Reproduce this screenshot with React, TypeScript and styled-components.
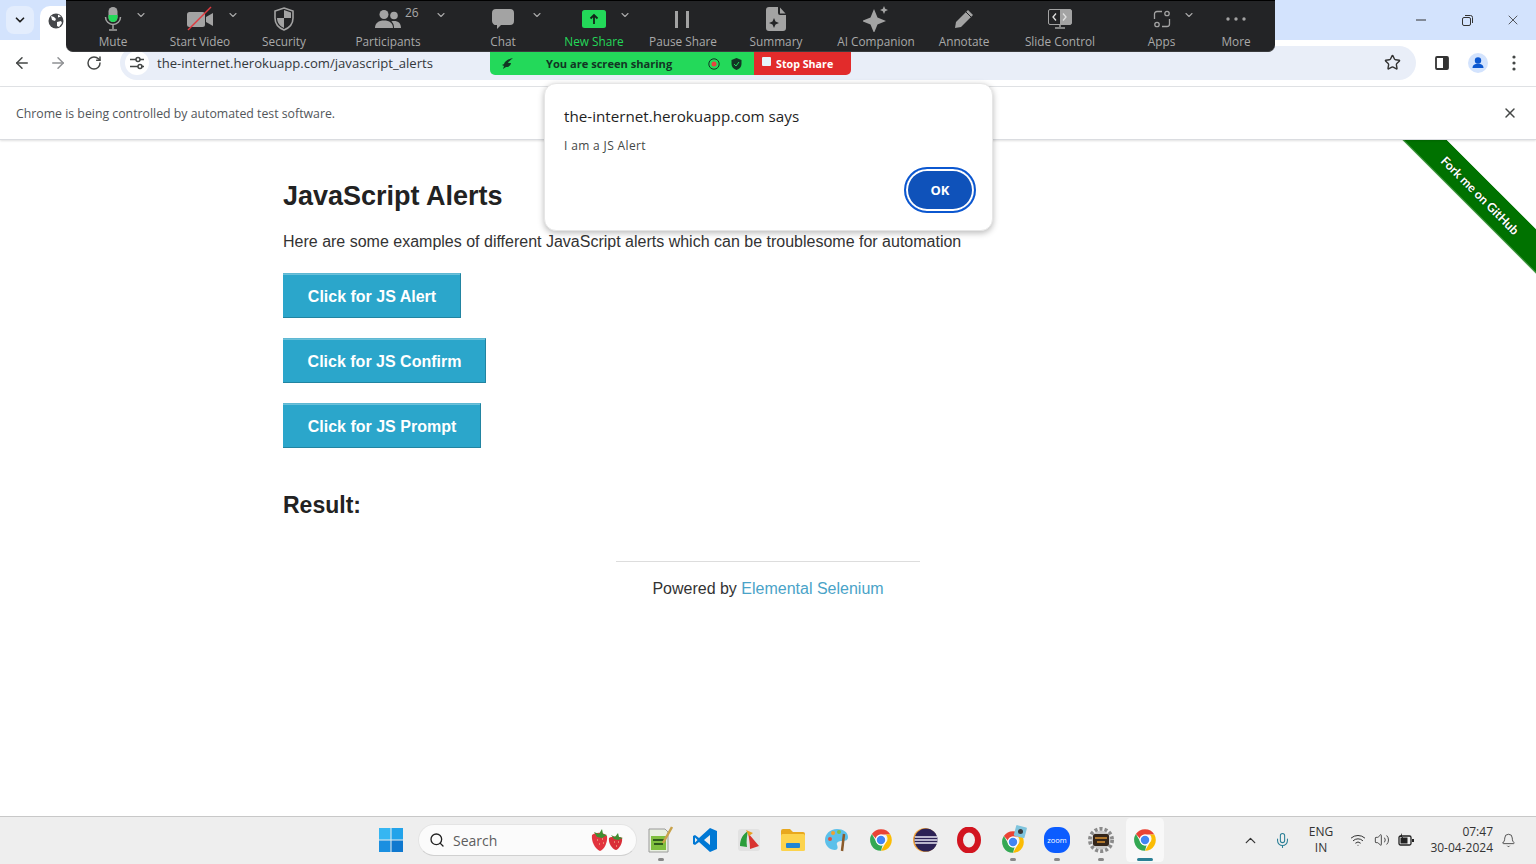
import React from 'react';
import styled, { createGlobalStyle } from 'styled-components';
import { ArrowLeft, ArrowRight, RotateCw, Star, X, Search, ChevronUp, ChevronDown, Mic, Wifi, Volume2, Bell } from 'lucide-react';

const GlobalStyle = createGlobalStyle`
  html, body { margin: 0; padding: 0; background: #fff; }
  body { font-family: "Open Sans", sans-serif; overflow: hidden; }
  * { box-sizing: border-box; }
`;

const Screen = styled.div`
  position: relative;
  width: 1536px;
  height: 864px;
  display: flex;
  flex-direction: column;
  overflow: hidden;
`;

/* browser chrome */
const TabStrip = styled.div`
  height: 40px;
  background: #d3e3fd;
  display: flex;
  align-items: flex-start;
  padding: 6px 0 0 6px;
  flex: none;
`;
const TabSearch = styled.div`
  width: 28px;
  height: 28px;
  border-radius: 8px;
  background: #e3edfd;
  color: #1f1f1f;
  display: flex;
  align-items: center;
  justify-content: center;
`;
const Tab = styled.div`
  width: 120px;
  height: 34px;
  margin-left: 6px;
  background: #fff;
  border-radius: 10px 10px 0 0;
  padding: 6px 0 0 8px;
`;
const WindowButtons = styled.div`
  margin-left: auto;
  margin-top: -6px;
  display: flex;
  color: #333;
`;
const WindowButton = styled.div`
  width: 46px;
  height: 40px;
  display: flex;
  align-items: center;
  justify-content: center;
`;
const NavBar = styled.div`
  height: 47px;
  background: #fff;
  border-radius: 8px 8px 0 0;
  border-bottom: 1px solid #e1e3e6;
  display: flex;
  align-items: center;
  padding: 0 0 1px 4px;
  flex: none;
`;
const NavButton = styled.div<{ $muted?: boolean }>`
  width: 36px;
  height: 36px;
  display: flex;
  align-items: center;
  justify-content: center;
  color: ${p => (p.$muted ? '#8f9194' : '#444746')};
`;
const Omnibox = styled.div`
  width: 1296px;
  height: 34px;
  margin-left: 8px;
  border-radius: 17px;
  background: #e9eef8;
  display: flex;
  align-items: center;
  padding: 0 15px 0 5px;
`;
const SiteButton = styled.div`
  width: 24px;
  height: 24px;
  border-radius: 50%;
  background: #fff;
  display: flex;
  align-items: center;
  justify-content: center;
`;
const Url = styled.span`
  margin-left: 8px;
  font-size: 13.1px;
  color: #33373b;
  white-space: nowrap;
  flex: 1;
`;
const ToolIcons = styled.div`
  display: flex;
  align-items: center;
  margin-left: 8px;
`;
const Infobar = styled.div`
  height: 53px;
  background: #fff;
  border-bottom: 1px solid #dadce0;
  box-shadow: 0 1px 2px rgba(0, 0, 0, 0.12);
  display: flex;
  align-items: center;
  justify-content: space-between;
  padding: 0 18px 0 16px;
  font-size: 12.3px;
  color: #52565a;
  flex: none;
  position: relative;
  z-index: 1;
`;

/* page */
const Main = styled.main`
  position: relative;
  flex: 1;
  overflow: hidden;
  background: #fff;
  font-family: "Liberation Sans", Arial, sans-serif;
  color: #222;
`;
const Row = styled.div`
  width: 970px;
  margin: 0 auto;
`;
const Heading = styled.h3`
  margin: 0;
  padding-top: 39px;
  font-size: 27px;
  line-height: 34px;
  font-weight: 700;
`;
const Intro = styled.p`
  margin: 17px 0 0;
  font-size: 16px;
  line-height: 24px;
  color: #333;
  white-space: nowrap;
`;
const Buttons = styled.div`
  margin-top: 19px;
  display: flex;
  flex-direction: column;
  align-items: flex-start;
  gap: 20px;
`;
const AlertButton = styled.button<{ $w: number }>`
  width: ${p => p.$w}px;
  height: 45px;
  padding: 2px 0 0 1px;
  background: #2ba6cb;
  border: 1px solid #2284a1;
  border-top-color: #5fb8d3;
  border-left: none;
  box-shadow: inset 0 1px 0 rgba(255, 255, 255, 0.3);
  color: #fff;
  font: 700 16px "Liberation Sans", Arial, sans-serif;
`;
const ResultTitle = styled.h4`
  margin: 42px 0 0;
  font-size: 23px;
  line-height: 30px;
  font-weight: 700;
`;
const Footer = styled.footer`
  margin: 41px auto 0;
  width: 304px;
  border-top: 1px solid #ddd;
  padding-top: 17px;
  text-align: center;
  font-size: 16px;
  line-height: 20px;
  color: #333;
  white-space: nowrap;
`;
const FooterLink = styled.a`
  color: #4aa3c8;
`;
const Ribbon = styled.div`
  position: absolute;
  top: 40px;
  right: -74px;
  width: 260px;
  height: 31px;
  transform: rotate(45deg);
  background: #007200;
  border-top: 1px solid #007200;
  border-bottom: 1px solid #4f9d4f;
  color: #fff;
  font: 700 12.3px Lato, sans-serif;
  display: flex;
  align-items: center;
  justify-content: center;
  text-shadow: 0 0 2px rgba(0, 0, 0, 0.5);
`;

/* zoom meeting controls */
const ZoomBar = styled.div`
  position: absolute;
  top: 0;
  left: 66px;
  width: 1209px;
  height: 52px;
  background: #232426;
  border-top: 1px solid #000;
  border-bottom: 1px solid #3a3b3d;
  border-radius: 0 0 7px 7px;
  display: flex;
  z-index: 5;
`;
const ZoomItem = styled.div<{ $w: number; $green?: boolean }>`
  position: relative;
  width: ${p => p.$w}px;
  flex: none;
  display: flex;
  flex-direction: column;
  align-items: center;
  color: ${p => (p.$green ? '#23d959' : '#a9a9a9')};
  font-size: 11.8px;
  white-space: nowrap;
`;
const ZoomIcon = styled.div`
  height: 34px;
  display: flex;
  align-items: center;
  justify-content: center;
  padding-top: 2px;
`;
const ZoomLabel = styled.span`
  line-height: 14px;
  margin-top: -1px;
`;
const ZoomCaret = styled.span<{ $dx: number }>`
  position: absolute;
  top: 8px;
  left: calc(50% + ${p => p.$dx}px);
  color: #a9a9a9;
  display: flex;
`;
const ZoomCount = styled.span`
  position: absolute;
  top: 4px;
  left: calc(50% + 17px);
  font-size: 12px;
  line-height: 16px;
  color: #a9a9a9;
`;
const ShareBar = styled.div`
  position: absolute;
  top: 52px;
  left: 490px;
  width: 361px;
  height: 23px;
  display: flex;
  border-radius: 0 0 5px 5px;
  overflow: hidden;
  font-size: 11.1px;
  font-weight: 700;
  z-index: 4;
`;
const ShareStatus = styled.div`
  width: 264px;
  background: #23d95a;
  color: #123524;
  display: flex;
  align-items: center;
  padding-left: 12px;
  white-space: nowrap;
`;
const ShareText = styled.span`
  margin-left: 32px;
  margin-right: 36px;
`;
const ShareShield = styled.svg`
  margin-left: 11px;
`;
const ShareStop = styled.div`
  flex: 1;
  background: #e22b2b;
  color: #fff;
  display: flex;
  align-items: center;
  padding-left: 8px;
  gap: 5px;
  font-size: 10.7px;
`;
const StopSquare = styled.span`
  width: 9px;
  height: 9px;
  margin-top: -4px;
  border-radius: 1px;
  background: #e6f5fb;
`;

/* js alert */
const Dialog = styled.div`
  position: absolute;
  top: 83px;
  left: 544px;
  width: 449px;
  height: 148px;
  background: #fff;
  border: 1px solid #e6e6e6;
  border-radius: 12px;
  box-shadow: 0 2px 6px rgba(0, 0, 0, 0.28);
  padding: 22px 16px 0 19px;
  display: flex;
  flex-direction: column;
  z-index: 3;
`;
const DialogTitle = styled.div`
  font-size: 15.2px;
  line-height: 20px;
  font-weight: 500;
  color: #1f1f1f;
`;
const DialogBody = styled.div`
  margin-top: 10px;
  font-size: 12px;
  letter-spacing: 0.35px;
  line-height: 20px;
  color: #444746;
`;
const DialogActions = styled.div`
  margin-top: 11px;
  display: flex;
  justify-content: flex-end;
`;
const OkButton = styled.button`
  width: 72px;
  height: 46px;
  border-radius: 23px;
  border: 2px solid #fff;
  outline: 2px solid #0b57d0;
  outline-offset: -2px;
  background: #0f52ba;
  box-shadow: inset 0 0 0 2px #fff;
  background-clip: padding-box;
  color: #fff;
  font: 700 13px "Open Sans", sans-serif;
`;

/* windows taskbar */
const Taskbar = styled.div`
  height: 48px;
  flex: none;
  background: #eeeeee;
  border-top: 1px solid #c8c8c8;
  display: flex;
  align-items: center;
  padding: 0 0 1px 369px;
  position: relative;
  z-index: 1;
`;
const TaskSlot = styled.div<{ $active?: boolean }>`
  position: relative;
  width: 44px;
  height: 44px;
  flex: none;
  display: flex;
  align-items: center;
  justify-content: center;
  border-radius: 6px;
  border: solid transparent;
  border-width: 0 3px;
  background: ${p => (p.$active ? '#f8f8f8' : 'transparent')};
  background-clip: padding-box;
`;
const TaskDot = styled.span<{ $active?: boolean }>`
  position: absolute;
  bottom: 1px;
  left: 50%;
  transform: translateX(-50%);
  width: ${p => (p.$active ? 16 : 6)}px;
  height: 3px;
  border-radius: 2px;
  background: ${p => (p.$active ? '#2a8095' : '#888')};
`;
const SearchBox = styled.div`
  width: 219px;
  height: 32px;
  margin: 0 2px 0 5px;
  flex: none;
  border-radius: 16px;
  background: #fbfbfb;
  border: 1px solid #e4e4e4;
  border-bottom-color: #d0d0d0;
  display: flex;
  align-items: center;
  padding: 0 12px 0 10px;
  color: #5d5d5d;
  font-size: 14px;
  gap: 8px;
`;
const SearchWord = styled.span`
  flex: 1;
`;
const Tray = styled.div`
  margin-left: 73px;
  display: flex;
  align-items: center;
  color: #333;
`;
const TrayText = styled.div<{ $w: number; $right?: boolean }>`
  width: ${p => p.$w}px;
  font-size: 12px;
  line-height: 16px;
  text-align: ${p => (p.$right ? 'right' : 'center')};
  color: #333;
  white-space: nowrap;
`;
const TraySlot = styled.div<{ $w: number; $ml?: number }>`
  width: ${p => p.$w}px;
  margin-left: ${p => p.$ml ?? 0}px;
  flex: none;
  display: flex;
  justify-content: center;
`;

const G = '#a3a3a3';

const MicIcon = () => (
  <svg width="18" height="26" viewBox="0 0 18 26">
    <rect x="4.5" y="1" width="9" height="15" rx="4.5" fill={G} />
    <path d="M4.5 9h9v2.5a4.5 4.5 0 0 1-9 0z" fill="#23d959" />
    <path d="M1.5 11a7.5 7.5 0 0 0 15 0M9 19v4M5 24h8" fill="none" stroke={G} strokeWidth="1.5" />
  </svg>
);
const VideoIcon = () => (
  <svg width="28" height="26" viewBox="0 0 28 26">
    <rect x="1" y="6" width="18" height="15" rx="2.5" fill={G} />
    <path d="M20 11l7-4v13l-7-4z" fill={G} />
    <path d="M2 24L25 1" stroke="#e0393e" strokeWidth="1.4" />
  </svg>
);
const ShieldIcon = () => (
  <svg width="22" height="24" viewBox="0 0 22 24">
    <path d="M11 1l9 3v7c0 6-4 10-9 12-5-2-9-6-9-12V4z" fill="none" stroke={G} strokeWidth="1.6" />
    <path d="M11 3l7 2.4V11h-7zM11 11v10c-3.8-1.7-6.8-5-7-10z" fill={G} />
  </svg>
);
const PeopleIcon = () => (
  <svg width="26" height="20" viewBox="0 0 26 20">
    <circle cx="9" cy="5.5" r="4.5" fill={G} />
    <circle cx="19" cy="6.5" r="3.8" fill={G} />
    <path d="M0 19c0-5 3.5-7.5 9-7.5s9 2.5 9 7.5z" fill={G} />
    <path d="M19 19h7c0-4.5-2.5-7-7-7-1 0-1.8.1-2.6.4 2 1.5 2.6 3.8 2.6 6.6z" fill={G} />
  </svg>
);
const ChatIcon = () => (
  <svg width="22" height="20" viewBox="0 0 22 20">
    <path d="M4 0h14a4 4 0 0 1 4 4v8a4 4 0 0 1-4 4H9l-4 4v-4.1A4 4 0 0 1 0 12V4a4 4 0 0 1 4-4z" fill={G} />
  </svg>
);
const NewShareIcon = () => (
  <svg width="24" height="18" viewBox="0 0 24 18">
    <rect width="24" height="18" rx="2.5" fill="#23d959" />
    <path d="M12 14V5M8.5 8.5L12 5l3.5 3.5" fill="none" stroke="#12261a" strokeWidth="1.8" />
  </svg>
);
const PauseIcon = () => (
  <svg width="16" height="17" viewBox="0 0 16 17">
    <rect x="0" y="0" width="3" height="17" fill={G} />
    <rect x="11" y="0" width="3" height="17" fill={G} />
  </svg>
);
const SummaryIcon = () => (
  <svg width="20" height="24" viewBox="0 0 20 24">
    <path d="M3 0h9v6a2 2 0 0 0 2 2h6v13a3 3 0 0 1-3 3H3a3 3 0 0 1-3-3V3a3 3 0 0 1 3-3z" fill={G} />
    <path d="M14 .5l5.5 6H14z" fill={G} />
    <path d="M8 11l1.5 3.5L13 16l-3.5 1.5L8 21l-1.5-3.5L3 16l3.5-1.5z" fill="#232426" />
  </svg>
);
const SparkIcon = () => (
  <svg width="26" height="26" viewBox="0 0 26 26">
    <path d="M11 3l3.5 8.5L23 15l-8.5 3.5L11 27l-3.5-8.5L-1 15l8.5-3.5z" fill={G} />
    <path d="M21 0l1.2 2.8L25 4l-2.800 1.200L21 8l-1.200-2.800L17 4l2.800-1.200z" fill={G} />
  </svg>
);
const PencilIcon = () => (
  <svg width="20" height="20" viewBox="0 0 20 20">
    <path d="M14 1l5 5L7 18l-6 1 1-6z" fill={G} />
    <path d="M12 3l5 5" stroke="#232426" strokeWidth="1" />
  </svg>
);
const SlideIcon = () => (
  <svg width="24" height="20" viewBox="0 0 24 20">
    <rect x=".5" y=".5" width="23" height="15" rx="1.5" fill="#232426" stroke={G} />
    <rect x="12" y="1" width="11" height="14" fill={G} />
    <path d="M8 4.5L5 8l3 3.5M15 4.5L18 8l-3 3.5" fill="none" strokeWidth="1.3" stroke="#e0e0e0" />
    <path d="M12 16v2M7 19h10" stroke={G} strokeWidth="1.5" />
  </svg>
);
const AppsIcon = () => (
  <svg width="18" height="18" viewBox="0 0 18 18">
    <path d="M9 1.500H4a2.500 2.500 0 0 0-2.500 2.500v5M16.500 9v5a2.500 2.500 0 0 1-2.500 2.500H9" fill="none" stroke={G} strokeWidth="1.3" />
    <circle cx="14" cy="3.5" r="2.2" fill="none" stroke={G} strokeWidth="1.3" />
    <circle cx="4" cy="14.5" r="2.2" fill="none" stroke={G} strokeWidth="1.3" />
  </svg>
);
const MoreIcon = () => (
  <svg width="20" height="4" viewBox="0 0 20 4">
    <circle cx="2" cy="2" r="1.7" fill={G} />
    <circle cx="10" cy="2" r="1.7" fill={G} />
    <circle cx="18" cy="2" r="1.7" fill={G} />
  </svg>
);

const ChromeLogo = ({ size = 26 }: { size?: number }) => (
  <svg width={size} height={size} viewBox="0 0 48 48">
    <path d="M24 4a20 20 0 0 1 17.3 10H24a10 10 0 0 0-9.5 7L7.2 13A20 20 0 0 1 24 4z" fill="#ea4335" />
    <path d="M41.3 14A20 20 0 0 1 24 44l8.7-15a10 10 0 0 0 0-15z" fill="#fbbc04" />
    <path d="M24 44A20 20 0 0 1 7.2 13l8.6 15a10 10 0 0 0 11 5.7z" fill="#34a853" />
    <circle cx="24" cy="24" r="10" fill="#fff" />
    <circle cx="24" cy="24" r="7.8" fill="#4285f4" />
  </svg>
);

const zoomItems = [
  { w: 94, label: 'Mute', icon: <MicIcon />, caret: 22 },
  { w: 80, label: 'Start Video', icon: <VideoIcon />, caret: 27 },
  { w: 88, label: 'Security', icon: <ShieldIcon /> },
  { w: 120, label: 'Participants', icon: <PeopleIcon />, caret: 47, count: '26' },
  { w: 110, label: 'Chat', icon: <ChatIcon />, caret: 28 },
  { w: 72, label: 'New Share', icon: <NewShareIcon />, caret: 25, green: true },
  { w: 106, label: 'Pause Share', icon: <PauseIcon /> },
  { w: 80, label: 'Summary', icon: <SummaryIcon /> },
  { w: 120, label: 'AI Companion', icon: <SparkIcon /> },
  { w: 56, label: 'Annotate', icon: <PencilIcon /> },
  { w: 136, label: 'Slide Control', icon: <SlideIcon /> },
  { w: 67, label: 'Apps', icon: <AppsIcon />, caret: 21 },
  { w: 82, label: 'More', icon: <MoreIcon /> },
];

const taskIcons: { icon: React.ReactNode; running?: boolean; active?: boolean }[] = [
  {
    running: true,
    icon: (
      <svg width="26" height="28" viewBox="0 0 26 28">
        <path d="M1 3h16l3 3v20H1z" fill="#e8efe0" stroke="#9a9a9a" />
        <rect x="3" y="10" width="15" height="14" fill="#7fbf3f" />
        <path d="M5 14h11M6 18h9" stroke="#2f5a1c" strokeWidth="2" />
        <path d="M24 1L15 17" stroke="#c9a24a" strokeWidth="2.5" />
      </svg>
    ),
  },
  {
    icon: (
      <svg width="24" height="24" viewBox="0 0 24 24">
        <path d="M17 0l7 3v18l-7 3L6 14l-4 3-2-1V8l2-1 4 3z" fill="#0078d4" />
        <path d="M17 7l-6 5 6 5z" fill="#eeeeee" />
        <path d="M2 9.5l2.5 2.5L2 14.5z" fill="#eeeeee" />
      </svg>
    ),
  },
  {
    icon: (
      <svg width="24" height="24" viewBox="0 0 24 24">
        <rect x="1" y="1" width="22" height="22" rx="3" fill="#e2e2e2" />
        <path d="M11 3c-5 3-8 8-8 15l7 1c-1-6 0-11 1-16z" fill="#2a9d3b" />
        <path d="M11 5l11 13-9 3c0-6-1-11-2-16z" fill="#d8322f" />
        <path d="M9 2l7 3-4 3z" fill="#e8a020" />
      </svg>
    ),
  },
  {
    icon: (
      <svg width="24" height="22" viewBox="0 0 24 22">
        <path d="M0 2a2 2 0 0 1 2-2h7l3 3h10a2 2 0 0 1 2 2v2H0z" fill="#e8a81e" />
        <rect y="5" width="24" height="17" rx="1.5" fill="#fcd34d" />
        <rect x="5" y="14" width="14" height="5" rx="1" fill="#1f84d6" />
      </svg>
    ),
  },
  {
    icon: (
      <svg width="24" height="24" viewBox="0 0 24 24">
        <path d="M12 1C5 1 0 6 0 12s5 10 10 10c3 0 3-3 2-5-1-3 2-4 5-4 4 0 6-1 6-4 0-5-5-8-11-8z" fill="#5cc0ea" />
        <circle cx="5" cy="11" r="2" fill="#e0523f" />
        <circle cx="8" cy="5" r="2" fill="#f0a030" />
        <circle cx="14" cy="4" r="2" fill="#7cc04a" />
        <path d="M19 6l-2 17" stroke="#8a5a2a" strokeWidth="2.5" />
      </svg>
    ),
  },
  { icon: <ChromeLogo /> },
  {
    icon: (
      <svg width="26" height="26" viewBox="0 0 26 26">
        <circle cx="13" cy="13" r="12" fill="#f0a23c" />
        <circle cx="14" cy="13" r="11.5" fill="#2c2255" />
        <path d="M3 10h22M2.5 13h23M3 16h22" stroke="#e8e6f2" strokeWidth="1.7" />
      </svg>
    ),
  },
  {
    icon: (
      <svg width="24" height="26" viewBox="0 0 24 26">
        <ellipse cx="12" cy="13" rx="9" ry="10.5" fill="none" stroke="#d2141f" strokeWidth="6" />
      </svg>
    ),
  },
  {
    running: true,
    icon: (
      <svg width="30" height="30" viewBox="0 0 30 30">
        <g transform="translate(2 4)">
          <ChromeLogo size={26} />
        </g>
        <rect x="17" y="1" width="11" height="11" rx="1" transform="rotate(15 22 6)" fill="#7fc4dd" />
        <circle cx="22.5" cy="6.5" r="2.5" fill="#3a3a3a" />
      </svg>
    ),
  },
  {
    running: true,
    icon: (
      <svg width="26" height="26" viewBox="0 0 26 26">
        <rect width="26" height="26" rx="11" fill="#0b5cff" />
        <text x="13" y="15.5" textAnchor="middle" fontSize="7.5" fontFamily="Open Sans" fill="#fff">zoom</text>
      </svg>
    ),
  },
  {
    running: true,
    icon: (
      <svg width="26" height="26" viewBox="0 0 26 26">
        <circle cx="13" cy="13" r="11" fill="none" stroke="#8a8a8a" strokeWidth="4" strokeDasharray="3 2" />
        <circle cx="13" cy="13" r="9.5" fill="#c9c9c9" />
        <rect x="5" y="7" width="16" height="12" rx="2" fill="#33251a" />
        <path d="M7 11h12M9 15h8" stroke="#d9902f" strokeWidth="1.5" />
      </svg>
    ),
  },
  { active: true, running: true, icon: <ChromeLogo /> },
];

const App: React.FC = () => (
  <Screen>
    <GlobalStyle />
    <TabStrip>
      <TabSearch>
        <ChevronDown size={14} strokeWidth={3} />
      </TabSearch>
      <Tab>
        <svg width="16" height="16" viewBox="0 0 16 16">
          <circle cx="8" cy="8" r="7.5" fill="#45474a" />
          <path d="M3 3l3 1 2 2-1 2-3-1zM9 9l4-1 1 2-3 4-2-1zM10 1.5l3 2-3 1z" fill="#fff" />
        </svg>
      </Tab>
      <WindowButtons>
        <WindowButton>
          <svg width="10" height="10" viewBox="0 0 10 10"><path d="M0 5h10" stroke="#333" /></svg>
        </WindowButton>
        <WindowButton>
          <svg width="11" height="11" viewBox="0 0 11 11">
            <rect x=".5" y="2.5" width="8" height="8" rx="1.5" fill="none" stroke="#333" />
            <path d="M3 .5h5.5a2 2 0 0 1 2 2V8" fill="none" stroke="#333" />
          </svg>
        </WindowButton>
        <WindowButton>
          <X size={16} strokeWidth={1.2} />
        </WindowButton>
      </WindowButtons>
    </TabStrip>

    <NavBar>
      <NavButton><ArrowLeft size={18} strokeWidth={2} /></NavButton>
      <NavButton $muted><ArrowRight size={18} strokeWidth={2} /></NavButton>
      <NavButton><RotateCw size={16} strokeWidth={2.2} /></NavButton>
      <Omnibox>
        <SiteButton>
          <svg width="14" height="14" viewBox="0 0 14 14">
            <path d="M0 3.5h6M0 10.5h8M11 10.5h3M10 3.5h4" stroke="#444746" strokeWidth="1.5" />
            <circle cx="8" cy="3.5" r="2" fill="none" stroke="#444746" strokeWidth="1.5" />
            <circle cx="10" cy="10.5" r="2" fill="none" stroke="#444746" strokeWidth="1.5" />
          </svg>
        </SiteButton>
        <Url>the-internet.herokuapp.com/javascript_alerts</Url>
        <Star size={17} strokeWidth={2} color="#333" />
      </Omnibox>
      <ToolIcons>
        <NavButton>
          <svg width="14" height="14" viewBox="0 0 14 14">
            <rect x="1" y="1" width="12" height="12" rx="1" fill="none" stroke="#333" strokeWidth="1.8" />
            <rect x="8" y="1" width="5" height="12" fill="#333" />
          </svg>
        </NavButton>
        <NavButton>
          <svg width="20" height="20" viewBox="0 0 20 20">
            <circle cx="10" cy="10" r="10" fill="#d3e3fd" />
            <circle cx="10" cy="7.5" r="3.2" fill="#0b57d0" />
            <path d="M4.5 15c0-3 2.5-4.2 5.5-4.2s5.5 1.2 5.500 4.200z" fill="#0b57d0" />
          </svg>
        </NavButton>
        <NavButton>
          <svg width="4" height="16" viewBox="0 0 4 16">
            <circle cx="2" cy="2" r="1.6" fill="#444746" />
            <circle cx="2" cy="8" r="1.6" fill="#444746" />
            <circle cx="2" cy="14" r="1.6" fill="#444746" />
          </svg>
        </NavButton>
      </ToolIcons>
    </NavBar>

    <Infobar>
      <span>Chrome is being controlled by automated test software.</span>
      <X size={16} strokeWidth={2.2} color="#444746" />
    </Infobar>

    <Main>
      <Row>
        <Heading>JavaScript Alerts</Heading>
        <Intro>Here are some examples of different JavaScript alerts which can be troublesome for automation</Intro>
        <Buttons>
          <AlertButton $w={178}>Click for JS Alert</AlertButton>
          <AlertButton $w={203}>Click for JS Confirm</AlertButton>
          <AlertButton $w={198}>Click for JS Prompt</AlertButton>
        </Buttons>
        <ResultTitle>Result:</ResultTitle>
      </Row>
      <Footer>
        Powered by <FooterLink>Elemental Selenium</FooterLink>
      </Footer>
      <Ribbon>Fork me on GitHub</Ribbon>
    </Main>

    <Taskbar>
      <TaskSlot>
        <svg width="24" height="24" viewBox="0 0 24 24">
          <rect x="0" y="0" width="11.5" height="11.5" fill="#36b6f2" />
          <rect x="12.5" y="0" width="11.5" height="11.5" fill="#22a3ea" />
          <rect x="0" y="12.5" width="11.5" height="11.5" fill="#1a8fe0" />
          <rect x="12.5" y="12.5" width="11.5" height="11.5" fill="#0f78cf" />
        </svg>
      </TaskSlot>
      <SearchBox>
        <Search size={16} strokeWidth={2} color="#222" />
        <SearchWord>Search</SearchWord>
        <svg width="34" height="24" viewBox="0 0 34 24">
          <path d="M2 7c4-3 11-3 15 1 1 6-3 14-7 15C5 21 1 13 2 7z" fill="#e2343e" />
          <path d="M4 4l5 2 3-5 1 5 4 1-5 3-5-1z" fill="#3f8f32" />
          <path d="M19 10c3-2 10-2 13 0 1 5-3 11-6 12-4-1-8-7-7-12z" fill="#d92f38" />
          <path d="M21 7l4 2 3-4 1 4 4 1-5 2-4-1z" fill="#3f8f32" />
          <path d="M7 12h1M12 11h1M9 16h1M13 15h1M24 14h1M28 14h1M26 18h1" stroke="#f7d9a0" />
        </svg>
      </SearchBox>
      {taskIcons.map((t, i) => (
        <TaskSlot key={i} $active={t.active}>
          {t.icon}
          {t.running && <TaskDot $active={t.active} />}
        </TaskSlot>
      ))}
      <Tray>
        <TraySlot $w={20}><ChevronUp size={17} strokeWidth={1.8} /></TraySlot>
        <TraySlot $w={44}><Mic size={17} strokeWidth={1.5} color="#2a7f96" /></TraySlot>
        <TrayText $w={34}>ENG<br />IN</TrayText>
        <TraySlot $w={24} $ml={8}><Wifi size={16} strokeWidth={1.5} /></TraySlot>
        <TraySlot $w={24}><Volume2 size={16} strokeWidth={1.3} /></TraySlot>
        <TraySlot $w={24}>
          <svg width="16" height="14" viewBox="0 0 16 14">
            <rect x="1" y="3" width="12" height="9" rx="1.5" fill="none" stroke="#222" strokeWidth="1.3" />
            <rect x="2.5" y="4.5" width="7" height="6" fill="#222" />
            <path d="M14 6h2v3h-2zM4 0L2 4h3l-1 3" fill="#222" />
          </svg>
        </TraySlot>
        <TrayText $w={75} $right>07:47<br />30-04-2024</TrayText>
        <TraySlot $w={30}><Bell size={15} strokeWidth={1.3} /></TraySlot>
      </Tray>
    </Taskbar>

    <Dialog>
      <DialogTitle>the-internet.herokuapp.com says</DialogTitle>
      <DialogBody>I am a JS Alert</DialogBody>
      <DialogActions>
        <OkButton>OK</OkButton>
      </DialogActions>
    </Dialog>

    <ZoomBar>
      {zoomItems.map(item => (
        <ZoomItem key={item.label} $w={item.w} $green={item.green}>
          <ZoomIcon>{item.icon}</ZoomIcon>
          <ZoomLabel>{item.label}</ZoomLabel>
          {item.count && <ZoomCount>{item.count}</ZoomCount>}
          {item.caret !== undefined && (
            <ZoomCaret $dx={item.caret}>
              <ChevronDown size={12} strokeWidth={2.2} />
            </ZoomCaret>
          )}
        </ZoomItem>
      ))}
    </ZoomBar>

    <ShareBar>
      <ShareStatus>
        <svg width="12" height="11" viewBox="0 0 12 11">
          <path d="M11 0C6 1 3 3 2 6L0 7l2 1-1 3 3-2c3 0 5-2 5-4L6 5c1-2 3-3 5-5z" fill="#123524" />
        </svg>
        <ShareText>You are screen sharing</ShareText>
        <svg width="12" height="12" viewBox="0 0 12 12">
          <circle cx="6" cy="6" r="5.2" fill="none" stroke="#123524" />
          <circle cx="6" cy="6" r="2.5" fill="#e8423f" />
        </svg>
        <ShareShield width="11" height="12" viewBox="0 0 11 12">
          <path d="M5.5 0l5 2v4c0 3-2 5-5 6-3-1-5-3-5-6V2z" fill="#123524" />
          <path d="M3 6l2 2 3-4" fill="none" stroke="#23d95a" />
        </ShareShield>
      </ShareStatus>
      <ShareStop>
        <StopSquare />
        Stop Share
      </ShareStop>
    </ShareBar>
  </Screen>
);

export default App;
